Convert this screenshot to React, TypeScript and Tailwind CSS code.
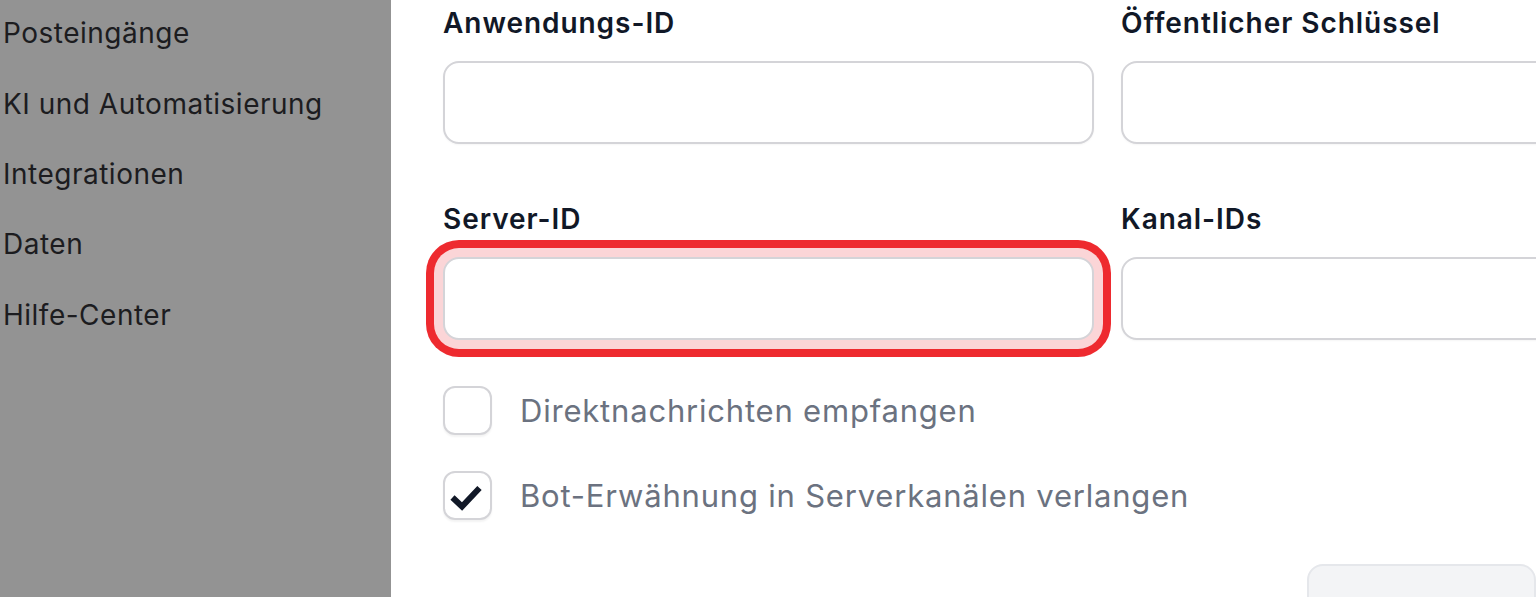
import React from "react";

const navItems = ["Posteingänge", "KI und Automatisierung", "Integrationen", "Daten", "Hilfe-Center"];

function Field({ label, highlighted }: { label: string; highlighted?: boolean }) {
    return (
        <div className="flex flex-col">
            <label className="h-[36px] text-[28px] font-semibold leading-[36px] tracking-[0.95px] text-[#111827]">
                {label}
            </label>
            <input
                type="text"
                className={`mt-[20px] h-[83px] w-full rounded-[16px] border-2 border-[#d4d4d8] bg-white px-5 outline-none ${highlighted ? "shadow-[0_0_0_9px_#fbd5d7,0_0_0_17px_#ee2a2f]" : "shadow-[0_1px_2px_rgba(0,0,0,0.04)]"
                    }`}
            />
        </div>
    );
}

function Checkbox({ label, checked }: { label: string; checked?: boolean }) {
    return (
        <label className="flex items-center gap-[28px]">
            <span className="flex h-[49px] w-[49px] shrink-0 items-center justify-center rounded-[12px] border-2 border-[#d4d4d8] bg-white shadow-[0_2px_2px_rgba(0,0,0,0.05)]">
                {checked && (
                    <svg width="49" height="49" viewBox="0 0 49 49" className="-m-[2px]">
                        <path d="M9.5 26.5 L19 35.5 L36.5 17" fill="none" stroke="#111827" strokeWidth="6" />
                    </svg>
                )}
            </span>
            <span className="text-[31px] leading-[49px] tracking-[0.8px] text-[#6b7280]">{label}</span>
        </label>
    );
}

export default function App() {
    return (
        <div className="flex h-[597px] w-[1536px] overflow-hidden bg-white font-['Inter',sans-serif]">
            <aside className="w-[391px] shrink-0 bg-[#939393] pl-[3px]">
                <nav className="-mt-[2px] flex flex-col">
                    {navItems.map((item) => (
                        <a key={item} className="flex h-[70.4px] items-center text-[28px] tracking-[0.5px] text-[#1c1c1f]">
                            {item}
                        </a>
                    ))}
                </nav>
            </aside>

            <main className="min-w-0 flex-1 pl-[52px] pt-[5px]">
                <div className="grid w-[1329px] grid-cols-2 gap-x-[27px] gap-y-[57px]">
                    <Field label="Anwendungs-ID" />
                    <Field label="Öffentlicher Schlüssel" />
                    <Field label="Server-ID" highlighted />
                    <Field label="Kanal-IDs" />
                </div>

                <div className="mt-[46px] flex flex-col gap-[36px]">
                    <Checkbox label="Direktnachrichten empfangen" />
                    <Checkbox label="Bot-Erwähnung in Serverkanälen verlangen" checked />
                </div>

                <div className="mt-[44px] flex justify-end">
                    <button className="h-[83px] w-[229px] rounded-[16px] border-2 border-[#e5e7eb] bg-[#f3f4f6] pt-[8px] text-[28px] font-semibold text-[#b8bcc3]">
                        Aktualisieren
                    </button>
                </div>
            </main>
        </div>
    );
}
